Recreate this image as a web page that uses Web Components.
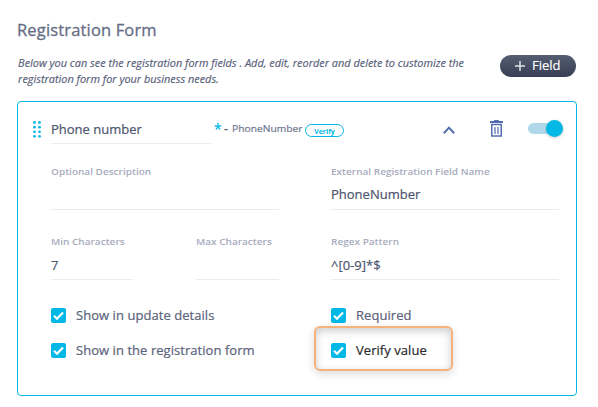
<!DOCTYPE html>
<html lang="en">
<head>
<meta charset="utf-8">
<title>Registration Form</title>
<style>
  body{margin:0;background:#fff;font-family:"Open Sans","Noto Sans",sans-serif;color:#4d556e}
</style>
</head>
<body>
<registration-form heading="Registration Form">
  <span slot="intro">Below you can see the registration form fields . Add, edit, reorder and delete to customize the registration form for your business needs.</span>
  <add-button slot="action">Field</add-button>
  <field-card name="Phone number" key="PhoneNumber" badge="Verify">
    <form-field label="Optional Description"></form-field>
    <form-field label="External Registration Field Name" value="PhoneNumber"></form-field>
    <field-pair>
      <form-field label="Min Characters" value="7" compact></form-field>
      <form-field label="Max Characters" compact></form-field>
    </field-pair>
    <form-field label="Regex Pattern" value="^[0-9]*$" compact></form-field>
    <check-box slot="checks">Show in update details</check-box>
    <check-box slot="checks">Required</check-box>
    <check-box slot="checks">Show in the registration form</check-box>
    <check-box slot="checks" highlight>Verify value</check-box>
  </field-card>
</registration-form>

<script>
class RegistrationForm extends HTMLElement {
  constructor(){
    super();
    const s=this.attachShadow({mode:'open'});
    s.innerHTML=`
      <style>
        :host{display:block;box-sizing:border-box;width:598px;height:407px;padding:19px 21px 0 17px}
        h1{margin:0;font-size:16.5px;line-height:22px;font-weight:400;color:#666d85;letter-spacing:.16px;-webkit-text-stroke:.3px currentColor}
        .row{display:flex;justify-content:space-between;height:46px;margin:14px 1px 0 0}
        .intro{width:420px;padding-left:1px;font-size:10px;line-height:16px;font-style:italic;color:#565e78;-webkit-text-stroke:.15px currentColor;transform:scaleX(1.09);transform-origin:0 0}
      </style>
      <h1></h1>
      <div class="row"><div class="intro"><slot name="intro"></slot></div><slot name="action"></slot></div>
      <slot></slot>`;
    s.querySelector('h1').textContent=this.getAttribute('heading');
  }
}
customElements.define('registration-form', RegistrationForm);

class AddButton extends HTMLElement {
  constructor(){
    super();
    const s=this.attachShadow({mode:'open'});
    s.innerHTML=`
      <style>
        :host{display:block}
        button{display:flex;align-items:center;gap:7px;width:76px;height:22px;padding:0 0 0 15px;border:0;border-radius:11px;
          background:linear-gradient(#555d73,#373f54);color:#fff;font:400 13px/20px "Open Sans","Noto Sans",sans-serif}
        svg{display:block;flex:none}
        span{margin-top:-2px;-webkit-text-stroke:.15px currentColor}
      </style>
      <button><svg width="10" height="10" viewBox="0 0 10 10"><path d="M5 0v10M0 5h10" stroke="#dfe2e8" stroke-width="1.5"/></svg><span><slot></slot></span></button>`;
  }
}
customElements.define('add-button', AddButton);

class ToggleSwitch extends HTMLElement {
  constructor(){
    super();
    const s=this.attachShadow({mode:'open'});
    s.innerHTML=`
      <style>
        :host{display:flex;align-items:center;justify-content:flex-end;width:32px;height:11px;padding-right:3px;border-radius:6px;background:#afd9ea}
        i{flex:none;width:17px;height:17px;margin-right:-3px;border-radius:50%;background:#04b8e6;box-shadow:0 1px 3px rgba(0,0,0,.2)}
      </style>
      <i></i>`;
  }
}
customElements.define('toggle-switch', ToggleSwitch);

class FieldCard extends HTMLElement {
  constructor(){
    super();
    const s=this.attachShadow({mode:'open'});
    s.innerHTML=`
      <style>
        :host{display:block;box-sizing:border-box;width:560px;height:295px;border:1px solid #04b8e0;border-radius:4px;padding:15px 13px 0 15px}
        svg{display:block;flex:none}
        .head{display:flex;align-items:center;height:24px}
        .name{width:160px;height:26px;margin:3px 3px 0 10px;padding-top:1px;box-sizing:border-box;border-bottom:1px solid #ebebf0;font-size:13px;line-height:21px;-webkit-text-stroke:.2px currentColor}
        .star{width:10px;color:#04b8e6;font-size:14px;line-height:14px;font-weight:600}
        .dash{width:8px;font-size:12px;line-height:14px;font-weight:600}
        .key{width:73px;font-size:9.5px;line-height:14px;color:#71788f;-webkit-text-stroke:.2px currentColor}
        .key b{display:inline-block;font-weight:400;transform:scaleX(1.08);transform-origin:0 0}
        .badge{box-sizing:border-box;width:39px;height:13px;margin-top:3px;border:1px solid #04b8e6;border-radius:7px;text-align:center;color:#04b8e6;font-size:7px;line-height:13px;font-weight:700}
        .tools{display:flex;align-items:center;margin:-2px 0 0 auto}
        .chev{margin:4px 35px 0 0}.trash{margin-right:25px}
        .grid{display:grid;grid-template-columns:228px 228px;column-gap:52px;padding-left:18px}
        .fields{margin-top:23px;row-gap:20px;grid-auto-rows:50px}
        .checks{margin-top:21px;row-gap:15px;grid-auto-rows:20px}
      </style>
      <div class="head">
        <svg width="8" height="17" viewBox="0 0 8 17" fill="#04b8e6">
          <circle cx="1.5" cy="1.5" r="1.4"/><circle cx="6.5" cy="1.5" r="1.4"/>
          <circle cx="1.5" cy="6.2" r="1.4"/><circle cx="6.5" cy="6.2" r="1.4"/>
          <circle cx="1.5" cy="10.8" r="1.4"/><circle cx="6.5" cy="10.8" r="1.4"/>
          <circle cx="1.5" cy="15.3" r="1.4"/><circle cx="6.5" cy="15.3" r="1.4"/>
        </svg>
        <div class="name"></div>
        <span class="star">*</span><span class="dash">-</span><span class="key"><b></b></span><span class="badge"></span>
        <div class="tools">
          <svg class="chev" width="12" height="8" viewBox="0 0 12 8"><path d="M.8 7.2 6 1.6l5.2 5.6" fill="none" stroke="#536eaf" stroke-width="2"/></svg>
          <svg class="trash" width="13" height="17" viewBox="0 0 13 17" fill="none" stroke="#536eaf">
            <path d="M0 2h13" stroke-width="2"/><path d="M4.2.5h4.6"/>
            <path d="M1.75 4.6h9.5v11.5h-9.5z" stroke-width="1.5"/><path d="M5 7v7M8 7v7" stroke-width="1.2"/>
          </svg>
          <toggle-switch></toggle-switch>
        </div>
      </div>
      <div class="grid fields"><slot></slot></div>
      <div class="grid checks"><slot name="checks"></slot></div>`;
    s.querySelector('.name').textContent=this.getAttribute('name');
    s.querySelector('.key b').textContent=this.getAttribute('key');
    s.querySelector('.badge').textContent=this.getAttribute('badge');
  }
}
customElements.define('field-card', FieldCard);

class FieldPair extends HTMLElement {
  constructor(){
    super();
    const s=this.attachShadow({mode:'open'});
    s.innerHTML=`
      <style>:host{display:grid;grid-template-columns:82px 83px;justify-content:space-between}</style>
      <slot></slot>`;
  }
}
customElements.define('field-pair', FieldPair);

class FormField extends HTMLElement {
  constructor(){
    super();
    const s=this.attachShadow({mode:'open'});
    s.innerHTML=`
      <style>
        :host{display:flex;flex-direction:column;box-sizing:border-box;height:46px;border-bottom:1px solid #ebebeb;white-space:nowrap}
        label{font-size:9.5px;line-height:16px;font-weight:600;color:#a8abbd;transform:scaleX(1.055);transform-origin:0 0}
        .value{margin-top:4px;font-size:13px;line-height:20px;-webkit-text-stroke:.2px currentColor}
        :host([compact]) .value{margin-top:5px}
      </style>
      <label></label><div class="value"></div>`;
    s.querySelector('label').textContent=this.getAttribute('label');
    s.querySelector('.value').textContent=this.getAttribute('value')||'';
  }
}
customElements.define('form-field', FormField);

class CheckBox extends HTMLElement {
  constructor(){
    super();
    const s=this.attachShadow({mode:'open'});
    s.innerHTML=`
      <style>
        :host{position:relative;display:flex;align-items:center;gap:10px;height:20px;font-size:13px;line-height:20px;letter-spacing:.05px;color:#5b637b}
        :host([highlight]){color:#2b2b2e}
        svg{display:block;flex:none}
        span{-webkit-text-stroke:.2px currentColor}
        .ring{display:none}
        /* callout frame laid over the option */
        :host([highlight]) .ring{display:block;position:absolute;left:-17px;top:-14px;width:135px;height:41px;border:2px solid #f6b27c;border-radius:6px;
          box-shadow:0 3px 8px rgba(0,0,0,.14),inset 0 3px 9px rgba(0,0,0,.2)}
      </style>
      <svg width="15" height="15" viewBox="0 0 15 15"><rect width="15" height="15" rx="2" fill="#04b8e6"/><path d="m3 7.8 3 2.9 6-6.2" fill="none" stroke="#fff" stroke-width="2.2"/></svg>
      <span><slot></slot></span><div class="ring"></div>`;
  }
}
customElements.define('check-box', CheckBox);
</script>
</body>
</html>
